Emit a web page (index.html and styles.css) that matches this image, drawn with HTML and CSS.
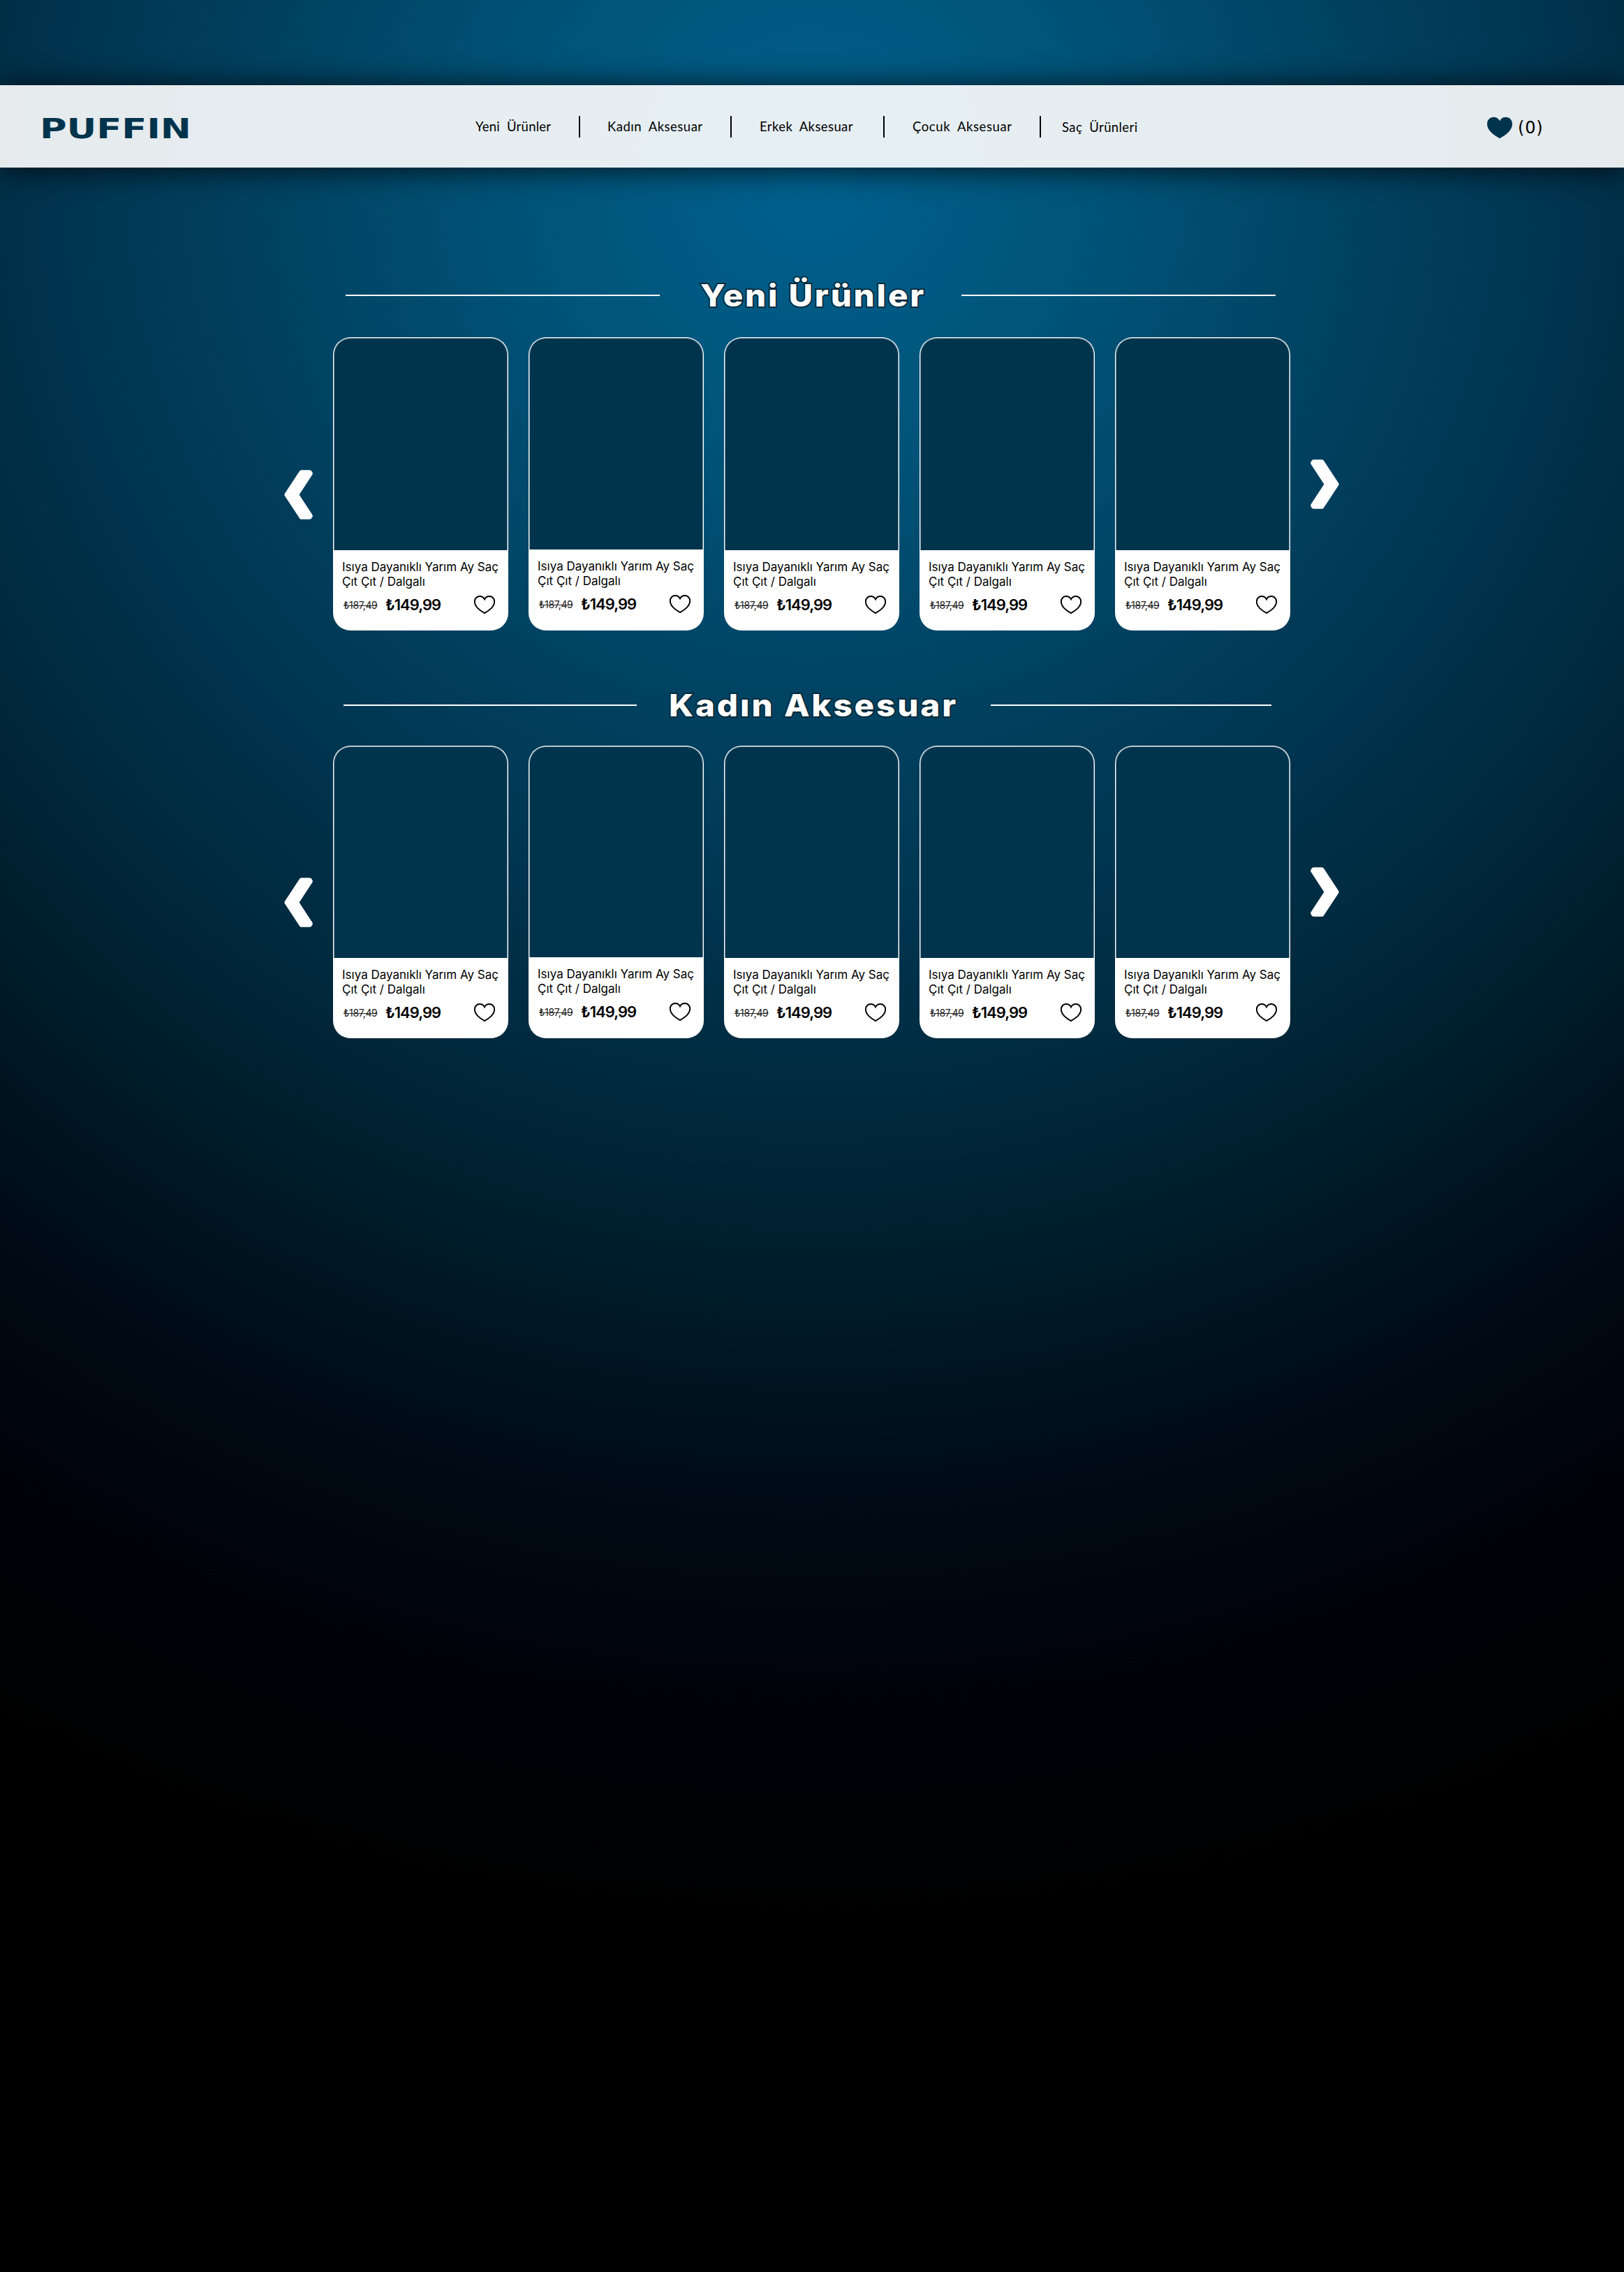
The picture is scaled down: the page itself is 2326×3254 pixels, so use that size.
FILE: index.html
```html
<!DOCTYPE html>
<html lang="tr">
<head>
<meta charset="utf-8">
<title>Puffin</title>
<link rel="stylesheet" href="styles.css">
</head>
<body>
<svg class="sprite" aria-hidden="true">
  <symbol id="heart" viewBox="0 0 38 32"><path d="M19 6.2C17.2 2.6 13.8.8 10.3.8 5 .8 1 5 1 10.4c0 4.400 2 8.200 5.700 12.100C10.200 26 14.500 28.800 19 31.300c4.500-2.500 8.800-5.300 12.300-8.800C35 18.600 37 14.800 37 10.400 37 5 33 .8 27.700.8 24.200.8 20.800 2.600 19 6.200z"/></symbol>
  <symbol id="prev" viewBox="0 0 41 71"><path d="M24.500.3H36.500Q38.500.3 39.600 2.200L40.400 3.600Q41.300 5.300 40.200 7L21.600 35.500 40.200 64Q41.300 65.700 40.400 67.400L39.600 68.800Q38.500 70.700 36.500 70.700H24.500Q23 70.700 22 69.200L.8 37Q0 35.500.8 34L22 1.800Q23 .3 24.500.3z"/></symbol>
</svg>

<header class="header">
  <a class="logo">PUFFIN</a>
  <nav class="nav">
    <a class="link yeni">Yeni Ürünler</a>
    <a class="link kadin">Kadın Aksesuar</a>
    <a class="link erkek">Erkek Aksesuar</a>
    <a class="link cocuk">Çocuk Aksesuar</a>
    <a class="link sac">Saç Ürünleri</a>
  </nav>
  <a class="favorites"><svg class="fav-icon"><use href="#heart"/></svg><span>(0)</span></a>
</header>

<main>
  <section class="section">
    <div class="heading new"><i></i><h2><span>Yeni Ürünler</span></h2><i></i></div>
    <div class="carousel">
      <svg class="arrow left"><use href="#prev"/></svg>
      <div class="cards">
        <article class="card"><div class="photo"></div><div class="info"><p>Isıya Dayanıklı Yarım Ay Saç<br>Çıt Çıt / Dalgalı</p><div class="prices"><s>₺187,49</s><b>₺149,99</b><svg><use href="#heart"/></svg></div></div></article>
        <article class="card"><div class="photo"></div><div class="info"><p>Isıya Dayanıklı Yarım Ay Saç<br>Çıt Çıt / Dalgalı</p><div class="prices"><s>₺187,49</s><b>₺149,99</b><svg><use href="#heart"/></svg></div></div></article>
        <article class="card"><div class="photo"></div><div class="info"><p>Isıya Dayanıklı Yarım Ay Saç<br>Çıt Çıt / Dalgalı</p><div class="prices"><s>₺187,49</s><b>₺149,99</b><svg><use href="#heart"/></svg></div></div></article>
        <article class="card"><div class="photo"></div><div class="info"><p>Isıya Dayanıklı Yarım Ay Saç<br>Çıt Çıt / Dalgalı</p><div class="prices"><s>₺187,49</s><b>₺149,99</b><svg><use href="#heart"/></svg></div></div></article>
        <article class="card"><div class="photo"></div><div class="info"><p>Isıya Dayanıklı Yarım Ay Saç<br>Çıt Çıt / Dalgalı</p><div class="prices"><s>₺187,49</s><b>₺149,99</b><svg><use href="#heart"/></svg></div></div></article>
      </div>
      <svg class="arrow right"><use href="#prev"/></svg>
    </div>
  </section>

  <section class="section">
    <div class="heading women"><i></i><h2><span>Kadın Aksesuar</span></h2><i></i></div>
    <div class="carousel short">
      <svg class="arrow left"><use href="#prev"/></svg>
      <div class="cards">
        <article class="card"><div class="photo"></div><div class="info"><p>Isıya Dayanıklı Yarım Ay Saç<br>Çıt Çıt / Dalgalı</p><div class="prices"><s>₺187,49</s><b>₺149,99</b><svg><use href="#heart"/></svg></div></div></article>
        <article class="card"><div class="photo"></div><div class="info"><p>Isıya Dayanıklı Yarım Ay Saç<br>Çıt Çıt / Dalgalı</p><div class="prices"><s>₺187,49</s><b>₺149,99</b><svg><use href="#heart"/></svg></div></div></article>
        <article class="card"><div class="photo"></div><div class="info"><p>Isıya Dayanıklı Yarım Ay Saç<br>Çıt Çıt / Dalgalı</p><div class="prices"><s>₺187,49</s><b>₺149,99</b><svg><use href="#heart"/></svg></div></div></article>
        <article class="card"><div class="photo"></div><div class="info"><p>Isıya Dayanıklı Yarım Ay Saç<br>Çıt Çıt / Dalgalı</p><div class="prices"><s>₺187,49</s><b>₺149,99</b><svg><use href="#heart"/></svg></div></div></article>
        <article class="card"><div class="photo"></div><div class="info"><p>Isıya Dayanıklı Yarım Ay Saç<br>Çıt Çıt / Dalgalı</p><div class="prices"><s>₺187,49</s><b>₺149,99</b><svg><use href="#heart"/></svg></div></div></article>
      </div>
      <svg class="arrow right"><use href="#prev"/></svg>
    </div>
  </section>
</main>
</body>
</html>
```
FILE: styles.css
```css
* { box-sizing: border-box; }

html { background: #000; }

body {
  margin: 0;
  padding-top: 122px;
  min-height: 3254px;
  font-family: Inter, sans-serif;
  background: radial-gradient(circle at 1163px 250px, #00608e 0, #005479 400px, #004363 750px, #00314a 1150px, #002435 1450px, #001926 1650px, #000b16 1900px, #00030b 2150px, #000 2500px) no-repeat;
}

.sprite { display: none; }

/* Header */
.header {
  display: flex;
  align-items: center;
  height: 118px;
  padding-left: 57px;
  background: rgba(255, 255, 255, .9);
  color: #000;
  box-shadow: 0 2px 42px 2px rgba(0, 0, 0, .75);
}
.logo {
  width: 624px;
  padding-top: 8px;
  font: 700 39px/1.16 "DejaVu Sans", sans-serif;
  color: #00344d;
  transform: scaleX(1.35);
  transform-origin: left;
}
.nav {
  display: flex;
  align-items: center;
  width: 1448px;
  font: 400 18.5px/31px Lato, sans-serif;
  letter-spacing: .4px;
  word-spacing: 5px;
  white-space: nowrap;
  padding-top: 1px;
}
.link + .link { border-left: 2px solid #000; }
.link { height: 31px; }
.yeni { width: 148px; letter-spacing: .25px; }
.kadin { width: 217px; padding-left: 39px; letter-spacing: .5px; }
.erkek { width: 219px; padding-left: 40px; }
.cocuk { width: 224px; padding-left: 40px; letter-spacing: .6px; }
.sac { padding-left: 30px; line-height: 33px; }
.favorites {
  display: flex;
  align-items: center;
  gap: 7px;
  padding-top: 3px;
  font: 400 24px/30px "DejaVu Sans", sans-serif;
  letter-spacing: .8px;
}
.favorites span { margin-top: 0; }
.fav-icon { width: 38px; height: 32px; fill: #00344d; }

/* Section headings */
.section { height: 584px; }
main { padding-top: 152px; }
.heading { display: flex; align-items: center; height: 62px; }
.heading i { flex: none; height: 2px; background: #fff; }
.heading h2 {
  margin: 0;
  font: 800 44px/60px Inter, sans-serif;
  color: #fff;
  white-space: nowrap;
  -webkit-text-stroke: 3.500px #012838;
  paint-order: stroke fill;
}
.heading span { display: inline-block; transform: scaleX(1.08); transform-origin: left; }
.new { padding-left: 495px; }
.new i { width: 450px; }
.new h2 { width: 432px; padding-left: 58px; letter-spacing: 2.6px; }
.women { padding-left: 492px; position: relative; top: 3px; }
.women i:first-child { width: 420px; }
.women i:last-child { width: 402px; }
.women h2 { width: 507px; padding-left: 46px; letter-spacing: 2.7px; }

/* Product carousels */
.carousel {
  display: flex;
  align-items: center;
  height: 420px;
  margin-top: 29px;
  padding-left: 407px;
}
.arrow { flex: none; width: 41px; height: 71px; fill: #fff; }
.left { margin: 31px 29px 0 0; }
.right { margin-left: 29px; transform: scaleX(-1); }
.cards { display: flex; align-items: flex-end; gap: 29px; height: 420px; }
.card {
  width: 251px;
  height: 420px;
  padding: 1px;
  border-radius: 25px;
  background: #fff;
  overflow: hidden;
}
.photo {
  height: 304px;
  border: 1px solid rgba(255, 255, 255, .45);
  border-bottom: 0;
  border-radius: 24px 24px 0 0;
  background: #00344d;
}
.card:nth-child(2) .photo { height: 303px; }
.short .card { height: 419px; }
.short .photo { height: 303px; }
.short .card:nth-child(2) .photo { height: 302px; }
.info { padding: 14px 18px 0 12px; }
.info p { margin: 0; font-size: 17px; line-height: 21px; white-space: nowrap; color: #000; }
.prices { display: flex; align-items: center; height: 30px; margin-top: 7px; white-space: nowrap; padding-left: 2px; }
.prices s { width: 60px; font-size: 14px; letter-spacing: -.3px; color: #222; }
.prices b { flex: 1; font-size: 22px; font-weight: 600; letter-spacing: -1px; }
.prices svg { width: 30px; height: 26px; fill: none; stroke: #000; stroke-width: 2.500px; overflow: visible; }
```
